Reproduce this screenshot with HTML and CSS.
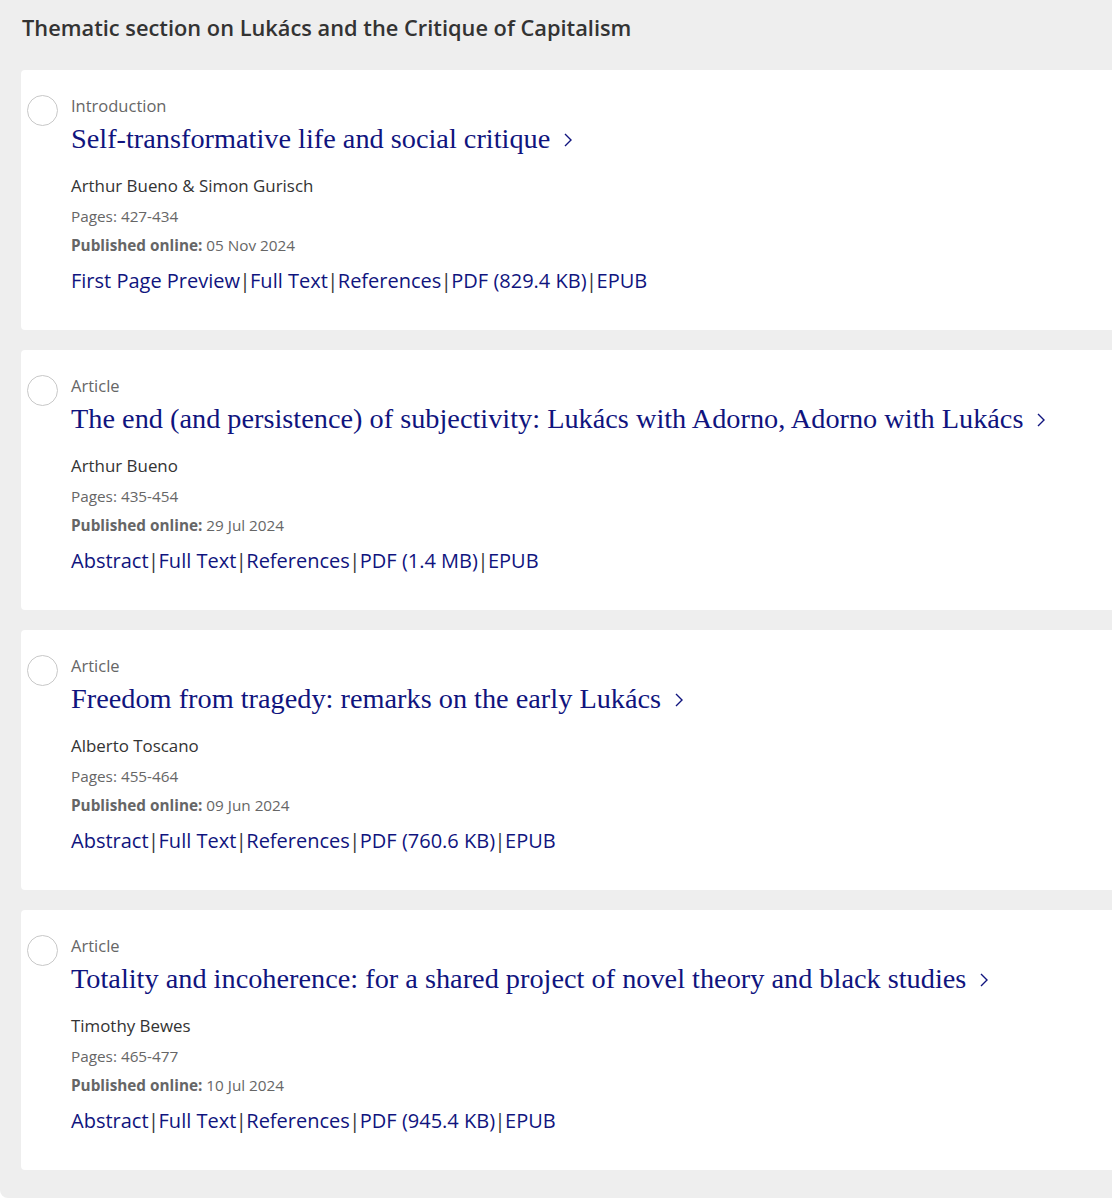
FILE: index.html
```html
<!DOCTYPE html>
<html>
<head>
<meta charset="utf-8">
<link rel="stylesheet" href="styles.css">
</head>
<body>
<div class="panel">
  <h2 class="section-title">Thematic section on Lukács and the Critique of Capitalism</h2>
  <div class="list">
    <div class="card">
      <span class="check"></span>
      <div class="body">
        <div class="type">Introduction</div>
        <a class="title">Self-transformative life and social critique<svg class="chev" viewBox="0 0 10 16" width="10" height="16"><path d="M2 2 L8 8 L2 14" fill="none" stroke="#10147e" stroke-width="1.4"/></svg></a>
        <div class="authors">Arthur Bueno &amp; Simon Gurisch</div>
        <div class="meta">Pages: 427-434</div>
        <div class="meta"><b>Published online:</b> 05 Nov 2024</div>
        <div class="links"><a>First Page Preview</a><span class="sep">|</span><a>Full Text</a><span class="sep">|</span><a>References</a><span class="sep">|</span><a>PDF (829.4 KB)</a><span class="sep">|</span><a>EPUB</a></div>
      </div>
    </div>
    <div class="card">
      <span class="check"></span>
      <div class="body">
        <div class="type">Article</div>
        <a class="title">The end (and persistence) of subjectivity: Lukács with Adorno, Adorno with Lukács<svg class="chev" viewBox="0 0 10 16" width="10" height="16"><path d="M2 2 L8 8 L2 14" fill="none" stroke="#10147e" stroke-width="1.4"/></svg></a>
        <div class="authors">Arthur Bueno</div>
        <div class="meta">Pages: 435-454</div>
        <div class="meta"><b>Published online:</b> 29 Jul 2024</div>
        <div class="links"><a>Abstract</a><span class="sep">|</span><a>Full Text</a><span class="sep">|</span><a>References</a><span class="sep">|</span><a>PDF (1.4 MB)</a><span class="sep">|</span><a>EPUB</a></div>
      </div>
    </div>
    <div class="card">
      <span class="check"></span>
      <div class="body">
        <div class="type">Article</div>
        <a class="title">Freedom from tragedy: remarks on the early Lukács<svg class="chev" viewBox="0 0 10 16" width="10" height="16"><path d="M2 2 L8 8 L2 14" fill="none" stroke="#10147e" stroke-width="1.4"/></svg></a>
        <div class="authors">Alberto Toscano</div>
        <div class="meta">Pages: 455-464</div>
        <div class="meta"><b>Published online:</b> 09 Jun 2024</div>
        <div class="links"><a>Abstract</a><span class="sep">|</span><a>Full Text</a><span class="sep">|</span><a>References</a><span class="sep">|</span><a>PDF (760.6 KB)</a><span class="sep">|</span><a>EPUB</a></div>
      </div>
    </div>
    <div class="card">
      <span class="check"></span>
      <div class="body">
        <div class="type">Article</div>
        <a class="title">Totality and incoherence: for a shared project of novel theory and black studies<svg class="chev" viewBox="0 0 10 16" width="10" height="16"><path d="M2 2 L8 8 L2 14" fill="none" stroke="#10147e" stroke-width="1.4"/></svg></a>
        <div class="authors">Timothy Bewes</div>
        <div class="meta">Pages: 465-477</div>
        <div class="meta"><b>Published online:</b> 10 Jul 2024</div>
        <div class="links"><a>Abstract</a><span class="sep">|</span><a>Full Text</a><span class="sep">|</span><a>References</a><span class="sep">|</span><a>PDF (945.4 KB)</a><span class="sep">|</span><a>EPUB</a></div>
      </div>
    </div>
  </div>
</div>
</body>
</html>
```

FILE: styles.css
```css
html, body {
  margin: 0;
  padding: 0;
  background: #ffffff;
  overflow: hidden;
}
body {
  font-family: "Open Sans", "Liberation Sans", sans-serif;
  width: 1112px;
}
.panel {
  background: #eeeeee;
  width: 1150px;
  padding: 14px 0 28px 21px;
  border-radius: 0 0 0 8px;
  box-sizing: border-box;
}
.section-title {
  margin: 0 0 0 1px;
  font-size: 21.8px;
  line-height: 28px;
  font-weight: 600;
  color: #333333;
}
.list {
  display: flex;
  flex-direction: column;
  gap: 20px;
  margin-top: 28px;
}
.card {
  background: #ffffff;
  border-radius: 4px;
  height: 260px;
  box-sizing: border-box;
  display: flex;
  padding: 25px 0 0 6px;
}
.check {
  flex: none;
  width: 29px;
  height: 29px;
  border: 1px solid #c8c8c8;
  border-radius: 50%;
}
.body {
  margin-left: 13px;
  display: flex;
  flex-direction: column;
}
.type {
  font-size: 16.5px;
  line-height: 22px;
  color: #666666;
}
.title {
  font-family: "Liberation Serif", "DejaVu Serif", serif;
  font-size: 28.3px;
  line-height: 36px;
  color: #10147e;
  margin-top: 4px;
  display: flex;
  align-items: center;
}
.chev {
  margin-left: 13px;
  margin-top: 2px;
}
.authors {
  font-size: 16.9px;
  line-height: 24px;
  color: #333333;
  margin-top: 17px;
}
.meta {
  font-size: 15.3px;
  line-height: 20px;
  color: #666666;
  margin-top: 8px;
}
.meta + .meta {
  margin-top: 9px;
}
.meta b {
  font-weight: 700;
}
.links {
  font-size: 20px;
  line-height: 28px;
  color: #10147e;
  margin-top: 12px;
}
.links a {
  color: #10147e;
}
.sep {
  color: #333333;
  margin: 0 -0.5px;
}
```
